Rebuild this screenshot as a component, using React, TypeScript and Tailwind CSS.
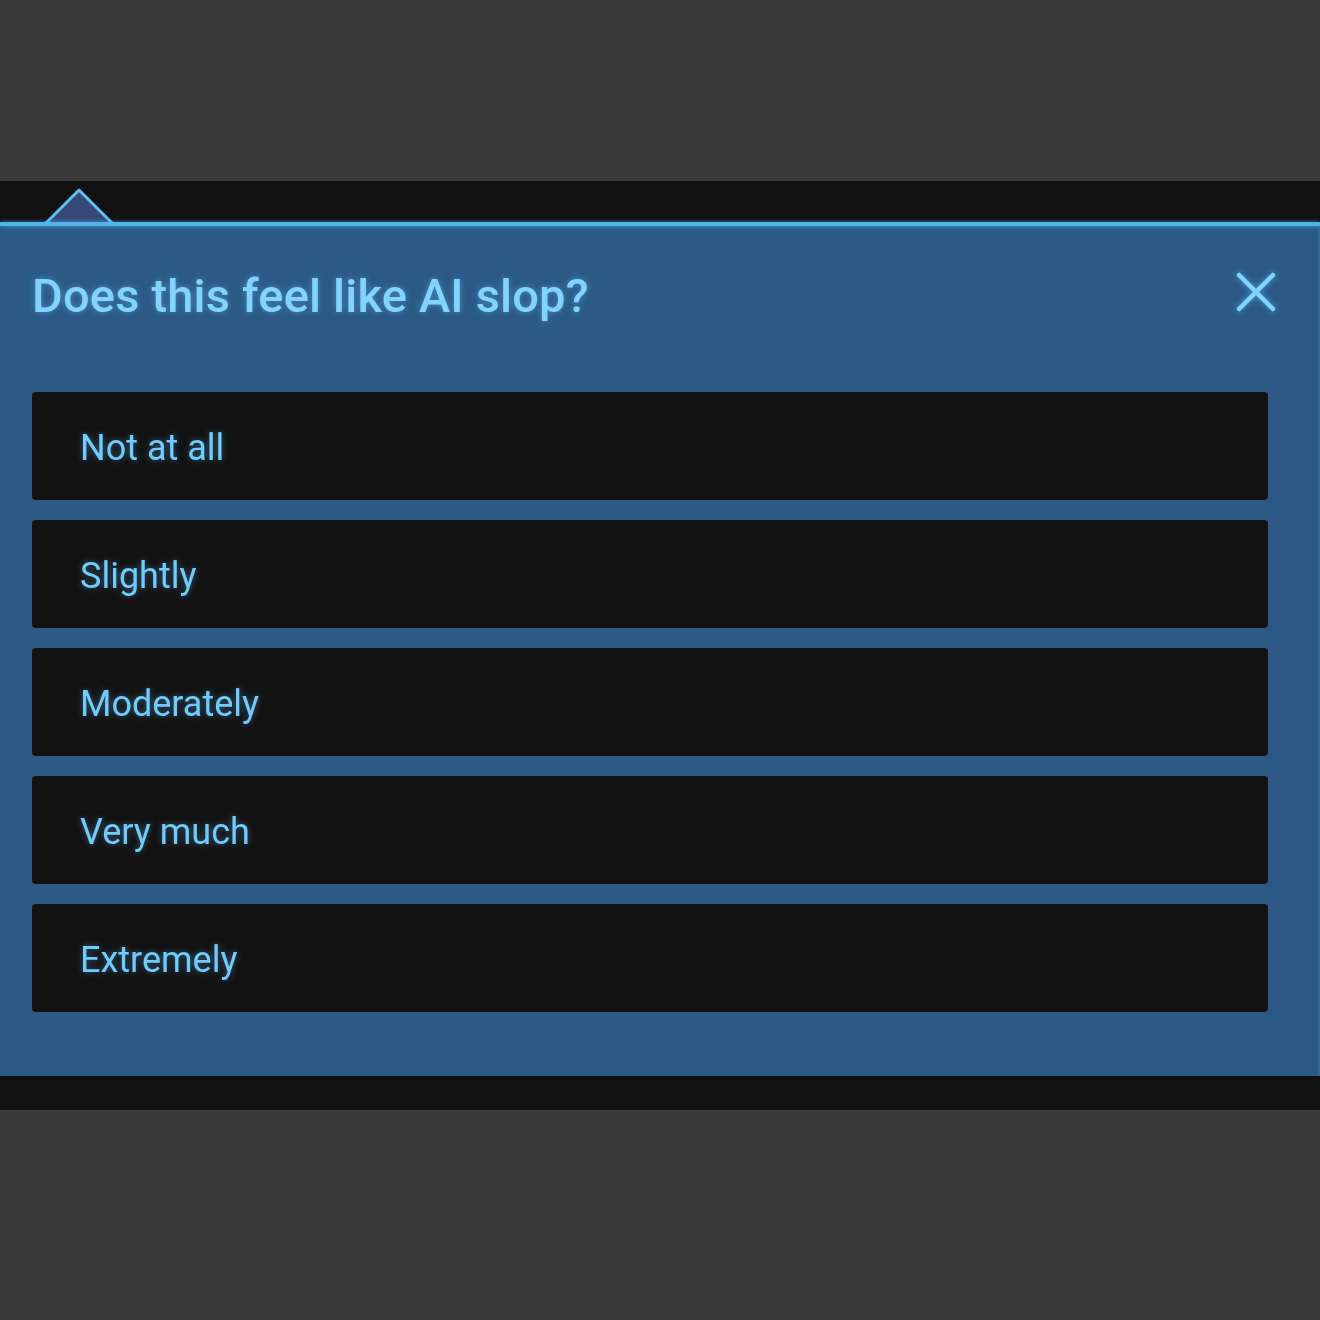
import React from 'react';

const options = ['Not at all', 'Slightly', 'Moderately', 'Very much', 'Extremely'];

function CloseIcon() {
  return (
    <svg width="40" height="40" viewBox="0 0 40 40" className="drop-shadow-[0_0_3px_rgba(110,200,255,0.6)]">
      <path d="M3 3 L37 37 M37 3 L3 37" stroke="#80d4ff" strokeWidth="4.5" strokeLinecap="round" fill="none" />
    </svg>
  );
}

export default function App() {
  return (
    <div
      className="w-[1320px] h-[1320px] bg-[#3a3a3a] flex flex-col"
      style={{ fontFamily: 'Roboto, "Noto Sans", sans-serif' }}
    >
      <div className="h-[181px] shrink-0" />
      <div className="h-[41px] shrink-0 bg-[#111111] relative">
        {/* pointer arrow */}
        <svg
          className="absolute left-[40px] top-[6px]"
          width="78"
          height="42"
          viewBox="0 0 78 42"
        >
          <polygon points="4,38 39,3 74,38" fill="#364a78" />
          <polyline
            points="4,38 39,3 74,38"
            fill="none"
            stroke="#5ec0f6"
            strokeWidth="3"
            strokeLinejoin="round"
          />
        </svg>
      </div>
      <div className="h-[4px] shrink-0 bg-[#4fb4ee] shadow-[0_0_4px_rgba(80,180,240,0.7)] relative z-0" />
      <div className="bg-[#2b5a86] h-[850px] shrink-0 pl-[32px] pr-[50px] pt-[46px] border-r-2 border-[#35668f]">
        <div className="flex items-start justify-between">
          <h1 className="text-[47px] leading-none font-medium text-[#82d4ff] tracking-[0.2px] drop-shadow-[0_0_3px_rgba(110,200,255,0.45)]">
            Does this feel like AI slop?
          </h1>
          <div className="mr-[-8px] mt-[0px]">
            <CloseIcon />
          </div>
        </div>
        <div className="mt-[73px] flex flex-col gap-[20px]">
          {options.map((o) => (
            <button
              key={o}
              className="h-[108px] w-full bg-[#121212] rounded-[4px] flex items-center pl-[48px] pt-[4px] text-left text-[36px] text-[#72cbfd]"
            >
              <span className="drop-shadow-[0_0_3px_rgba(100,190,255,0.45)]">{o}</span>
            </button>
          ))}
        </div>
      </div>
      <div className="h-[34px] shrink-0 bg-[#111111]" />
      <div className="flex-1" />
    </div>
  );
}
